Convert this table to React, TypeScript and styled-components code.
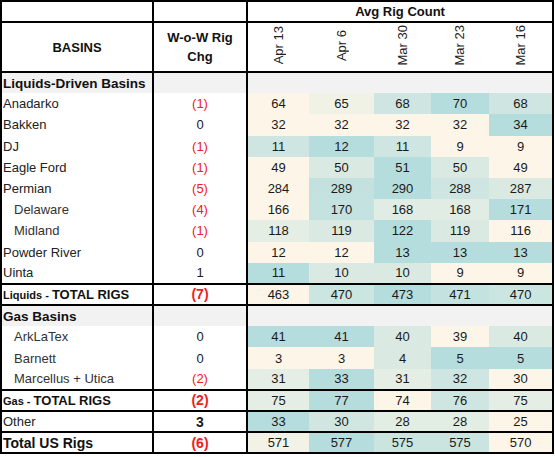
import styled, { createGlobalStyle } from 'styled-components';

const Global = createGlobalStyle`
  html, body { margin: 0; padding: 0; background: #fff; }
  body { font-family: "Liberation Sans", Arial, sans-serif; color: #222; }
`;

type Kind = 'section' | 'row' | 'total' | 'other' | 'grand';
type Row = { kind: Kind; label: string; indent?: boolean; chg?: number; vals?: number[] };

const DATES = ['Apr 13', 'Apr 6', 'Mar 30', 'Mar 23', 'Mar 16'];
const COLS = [62, 65, 57, 58, 64];

const ROWS: Row[] = [
  { kind: 'section', label: 'Liquids-Driven Basins' },
  { kind: 'row', label: 'Anadarko', chg: -1, vals: [64, 65, 68, 70, 68] },
  { kind: 'row', label: 'Bakken', chg: 0, vals: [32, 32, 32, 32, 34] },
  { kind: 'row', label: 'DJ', chg: -1, vals: [11, 12, 11, 9, 9] },
  { kind: 'row', label: 'Eagle Ford', chg: -1, vals: [49, 50, 51, 50, 49] },
  { kind: 'row', label: 'Permian', chg: -5, vals: [284, 289, 290, 288, 287] },
  { kind: 'row', label: 'Delaware', indent: true, chg: -4, vals: [166, 170, 168, 168, 171] },
  { kind: 'row', label: 'Midland', indent: true, chg: -1, vals: [118, 119, 122, 119, 116] },
  { kind: 'row', label: 'Powder River', chg: 0, vals: [12, 12, 13, 13, 13] },
  { kind: 'row', label: 'Uinta', chg: 1, vals: [11, 10, 10, 9, 9] },
  { kind: 'total', label: 'Liquids', chg: -7, vals: [463, 470, 473, 471, 470] },
  { kind: 'section', label: 'Gas Basins' },
  { kind: 'row', label: 'ArkLaTex', indent: true, chg: 0, vals: [41, 41, 40, 39, 40] },
  { kind: 'row', label: 'Barnett', indent: true, chg: 0, vals: [3, 3, 4, 5, 5] },
  { kind: 'row', label: 'Marcellus + Utica', indent: true, chg: -2, vals: [31, 33, 31, 32, 30] },
  { kind: 'total', label: 'Gas', chg: -2, vals: [75, 77, 74, 76, 75] },
  { kind: 'other', label: 'Other', chg: 3, vals: [33, 30, 28, 28, 25] },
  { kind: 'grand', label: 'Total US Rigs', chg: -6, vals: [571, 577, 575, 575, 570] },
];

// heat scale per row: cream (low) -> teal (high)
const LOW = [253, 246, 232];
const HIGH = [182, 221, 221];
function heat(v: number, vals: number[]) {
  const min = Math.min(...vals);
  const max = Math.max(...vals);
  const t = max === min ? 0 : (v - min) / (max - min);
  const c = LOW.map((l, i) => Math.round(l + (HIGH[i] - l) * t));
  return `rgb(${c[0]}, ${c[1]}, ${c[2]})`;
}

const Table = styled.table`
  border-collapse: collapse;
  table-layout: fixed;
  width: 554px;
  border: 2px solid #000;
  font-size: 13px;
`;

const HeadCell = styled.th<{ $h?: number; $edge?: boolean }>`
  height: ${p => p.$h ?? 20}px;
  padding: 0;
  font-weight: bold;
  font-size: 13px;
  color: #111;
  text-align: center;
  vertical-align: middle;
  border-bottom: 2px solid #000;
  border-right: ${p => (p.$edge ? '2px solid #000' : 'none')};
  line-height: 19px;
`;

const DateCell = styled.th`
  height: 48px;
  padding: 0;
  font-weight: normal;
  font-size: 13px;
  color: #222;
  border-bottom: 2px solid #000;
  vertical-align: middle;
  text-align: center;
`;

const Rotated = styled.span`
  display: inline-block;
  writing-mode: vertical-rl;
  transform: rotate(180deg);
  line-height: 14px;
`;

const Tr = styled.tr<{ $boxed?: boolean; $bg?: string }>`
  height: 21.2px;
  background: ${p => p.$bg ?? '#fff'};
  border-top: ${p => (p.$boxed ? '2px solid #000' : 'none')};
  border-bottom: ${p => (p.$boxed ? '2px solid #000' : 'none')};
`;

const Label = styled.td<{ $indent?: boolean; $weight?: string; $size?: number; $color?: string }>`
  padding: 0 0 0 ${p => (p.$indent ? 12 : 1)}px;
  border-right: 2px solid #000;
  font-weight: ${p => p.$weight ?? 'normal'};
  font-size: ${p => p.$size ?? 13}px;
  color: ${p => p.$color ?? '#222'};
  white-space: nowrap;
  overflow: hidden;
`;

const Small = styled.span`
  font-size: 11px;
`;

const Chg = styled.td<{ $neg?: boolean; $bold?: boolean }>`
  padding: 0;
  text-align: center;
  border-right: 2px solid #000;
  color: ${p => (p.$neg ? '#f02020' : '#1a1a1a')};
  font-weight: ${p => (p.$bold ? 'bold' : 'normal')};
  font-size: ${p => (p.$bold ? 14 : 13)}px;
`;

const Num = styled.td`
  padding: 0;
  text-align: center;
  color: #1a1a1a;
`;

function fmtChg(n: number) {
  return n < 0 ? `(${-n})` : String(n);
}

export default function App() {
  return (
    <>
      <Global />
      <Table>
        <colgroup>
          <col style={{ width: 152 }} />
          <col style={{ width: 94 }} />
          {COLS.map((w, i) => (
            <col key={i} style={{ width: w }} />
          ))}
        </colgroup>
        <thead>
          <tr>
            <HeadCell $h={19} $edge />
            <HeadCell $h={19} $edge />
            <HeadCell $h={19} colSpan={5}>Avg Rig Count</HeadCell>
          </tr>
          <tr>
            <HeadCell $h={48} $edge>BASINS</HeadCell>
            <HeadCell $h={48} $edge>
              W-o-W Rig
              <br />
              Chg
            </HeadCell>
            {DATES.map(d => (
              <DateCell key={d}>
                <Rotated>{d}</Rotated>
              </DateCell>
            ))}
          </tr>
        </thead>
        <tbody>
          {ROWS.map(r => {
            if (r.kind === 'section') {
              return (
                <Tr key={r.label} $bg="#f2f2f2">
                  <Label $weight="bold" $size={13.5} $color="#111">{r.label}</Label>
                  <Chg />
                  <Num colSpan={5} />
                </Tr>
              );
            }
            const boxed = r.kind === 'total' || r.kind === 'other' || r.kind === 'grand';
            const neg = (r.chg ?? 0) < 0;
            return (
              <Tr key={r.label} $boxed={boxed}>
                {r.kind === 'total' ? (
                  <Label $weight="bold" $size={13} $color="#111">
                    <Small>{r.label} - </Small>TOTAL RIGS
                  </Label>
                ) : (
                  <Label
                    $indent={r.indent}
                    $weight={r.kind === 'grand' ? 'bold' : 'normal'}
                    $size={r.kind === 'grand' ? 14 : 13}
                    $color={r.kind === 'grand' ? '#111' : r.indent ? '#333' : '#222'}
                  >
                    {r.label}
                  </Label>
                )}
                <Chg $neg={neg} $bold={boxed}>{fmtChg(r.chg ?? 0)}</Chg>
                {r.vals!.map((v, i) => (
                  <Num key={i} style={{ background: heat(v, r.vals!) }}>{v}</Num>
                ))}
              </Tr>
            );
          })}
        </tbody>
      </Table>
    </>
  );
}
